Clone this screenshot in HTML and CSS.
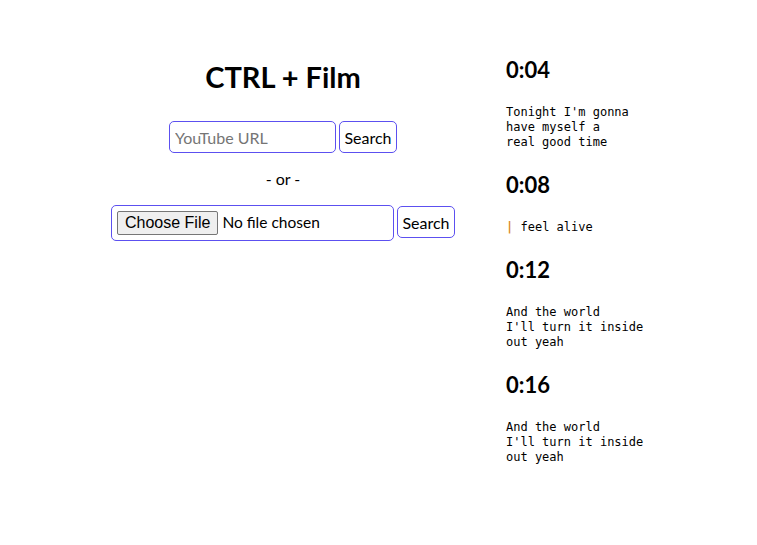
FILE: index.html
```html
<!DOCTYPE html>
<html lang="en">
<head>
<meta charset="utf-8">
<title>CTRL + Film</title>
<link rel="stylesheet" href="styles.css">
</head>
<body>
<div class="page">
  <main class="left">
    <h1 class="title">CTRL + Film</h1>
    <form class="row">
      <input class="url" type="text" placeholder="YouTube URL"><button class="btn" type="button">Search</button>
    </form>
    <p class="or">- or -</p>
    <form class="row">
      <input class="file" type="file"><button class="btn" type="button">Search</button>
    </form>
  </main>
  <aside class="right">
    <section class="entry">
      <h2 class="time">0:04</h2>
      <pre class="lyric">Tonight I'm gonna
have myself a
real good time</pre>
    </section>
    <section class="entry">
      <h2 class="time">0:08</h2>
      <pre class="lyric"><span class="bar">|</span> feel alive</pre>
    </section>
    <section class="entry">
      <h2 class="time">0:12</h2>
      <pre class="lyric">And the world
I'll turn it inside
out yeah</pre>
    </section>
    <section class="entry">
      <h2 class="time">0:16</h2>
      <pre class="lyric">And the world
I'll turn it inside
out yeah</pre>
    </section>
  </aside>
</div>
</body>
</html>
```

FILE: styles.css
```css
* { box-sizing: border-box; }
html, body { margin: 0; background: #fff; }
body {
  font-family: Lato, "Open Sans", sans-serif;
  color: #000;
}
.page {
  display: flex;
  padding-left: 60px;
}
.left {
  width: 446px;
  text-align: center;
  padding-top: 57px;
}
.title {
  margin: 0 0 24px;
  font-size: 29px;
  line-height: 40px;
  font-weight: 700;
}
.row {
  display: flex;
  justify-content: center;
  align-items: flex-start;
  gap: 3px;
  margin: 0;
}
.url {
  width: 167px;
  height: 32px;
  border: 1px solid #5c50f0;
  border-radius: 5px;
  padding: 0 5px;
  font: 16px Lato, sans-serif;
  color: #000;
}
.url::placeholder { color: #757575; }
.btn {
  height: 32px;
  width: 58px;
  background: #fff;
  border: 1px solid #5c50f0;
  border-radius: 5px;
  font: 16px Lato, sans-serif;
  color: #000;
  padding: 0;
}
.or {
  margin: 16px 0 16px;
  font-size: 16px;
  line-height: 20px;
}
.file {
  width: 283px;
  height: 36px;
  border: 1px solid #5c50f0;
  border-radius: 5px;
  padding: 5px 5px 2px;
  font: 15.5px Lato, sans-serif;
  text-align: left;
}
.file::file-selector-button {
  font: 16px "Liberation Sans", Arial, sans-serif;
  background: #efefef;
  border: 1px solid #767676;
  border-radius: 2px;
  padding: 2px 7px;
  margin-right: 4px;
  color: #000;
}
.row .file + .btn { margin-top: 1px; }
.right {
  padding-top: 55px;
}
.entry { margin-bottom: 20px; }
.time {
  margin: 0;
  font-size: 22px;
  line-height: 30px;
  font-weight: 700;
}
.lyric {
  margin: 20px 0 0;
  font: 12px/15px "DejaVu Sans Mono", "Liberation Mono", monospace;
}
.bar { color: #dc8a2a; font-weight: 700; }
```
